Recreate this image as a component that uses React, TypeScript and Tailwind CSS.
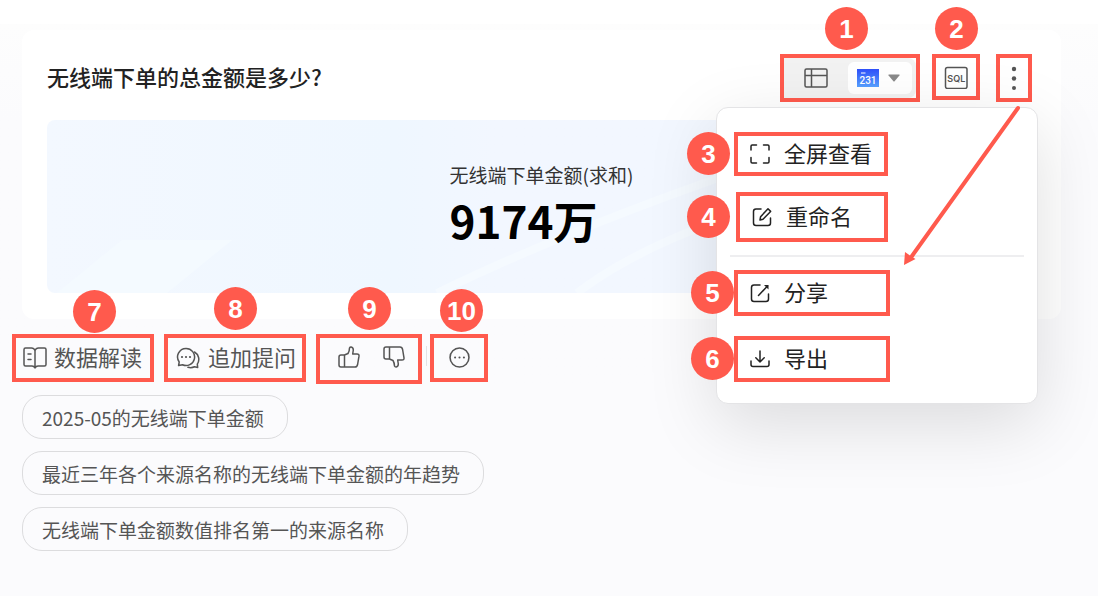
import type { ReactNode } from 'react'

const QUESTIONS = [
  '2025-05的无线端下单金额',
  '最近三年各个来源名称的无线端下单金额的年趋势',
  '无线端下单金额数值排名第一的来源名称'
]

interface CalloutProps {
  no: number
  className?: string
  badgeClassName: string
  children: ReactNode
}

// Red frame with a numbered badge next to it
function Callout({ no, className = '', badgeClassName, children }: CalloutProps) {
  return (
    <div className={`relative flex border-4 border-[#ff5a4d] ${className}`}>
      {children}
      <span
        className={`absolute z-20 flex size-[43px] items-center justify-center rounded-full bg-[#ff5a4d] font-['Liberation_Sans',sans-serif] text-[26px] leading-none font-bold text-white ${badgeClassName}`}
      >
        {no}
      </span>
    </div>
  )
}

function Icon({ children, className = 'size-5', box = '0 0 20 20' }: { children: ReactNode; className?: string; box?: string }) {
  return (
    <svg
      viewBox={box}
      fill="none"
      stroke="currentColor"
      strokeWidth={1.5}
      strokeLinecap="round"
      strokeLinejoin="round"
      className={`shrink-0 ${className}`}
      aria-hidden="true"
    >
      {children}
    </svg>
  )
}

function MenuItem({ icon, label }: { icon: ReactNode; label: string }) {
  return (
    <button type="button" role="menuitem" className="flex flex-1 items-center gap-[14px] pl-3 text-[22px] leading-none text-[#222]">
      {icon}
      <span className="pb-1">{label}</span>
    </button>
  )
}

function MoreMenu() {
  return (
    <div
      role="menu"
      className="absolute top-[49px] -right-[10px] z-10 flex w-[322px] flex-col rounded-xl border border-[#e4e4e6] bg-white px-[13px] pt-6 pb-[21px] shadow-[0_20px_70px_rgba(0,0,0,0.13)]"
    >
      <Callout no={3} className="ml-1 h-11 w-[154px]" badgeClassName="-top-1 -left-[51px]">
        <MenuItem
          label="全屏查看"
          icon={
            <Icon>
              <path d="M1 6V2.2Q1 1 2.2 1H6.500M13.500 1h4.300Q19 1 19 2.200V6M19 13.500v4.300Q19 19 17.800 19H13.500M6.500 19H2.200Q1 19 1 17.800V13.500" />
            </Icon>
          }
        />
      </Callout>
      <Callout no={4} className="mt-4 ml-[6px] h-[50px] w-[152px]" badgeClassName="-top-px -left-[53px]">
        <MenuItem
          label="重命名"
          icon={
            <Icon>
              <path d="M9 2H4Q1.500 2 1.500 4.500v11.500Q1.500 18.500 4 18.500h12Q18.500 18.500 18.500 16V11" />
              <path d="M16 1.800 18.600 4.400 11 12.200 8 13 8.600 9.700Z" />
            </Icon>
          }
        />
      </Callout>
      <hr className="my-[13px] border-t-2 border-[#eeeef0]" />
      <Callout no={5} className="ml-1 h-[46px] w-[156px]" badgeClassName="-top-[3px] -left-[47px]">
        <MenuItem
          label="分享"
          icon={
            <Icon>
              <path d="M10 2H4Q1.500 2 1.500 4.500v11.500Q1.500 18.500 4 18.500h12Q18.500 18.500 18.500 16V11" />
              <path d="M8.500 12.500 17.500 3" />
              <path d="M14 2h4.500v4.500Z" fill="currentColor" stroke="none" />
            </Icon>
          }
        />
      </Callout>
      <Callout no={6} className="mt-5 ml-1 h-[46px] w-[156px]" badgeClassName="-top-[3px] -left-[47px]">
        <MenuItem
          label="导出"
          icon={
            <Icon>
              <path d="M1 12v3.500Q1 17.500 3 17.500h14Q19 17.500 19 15.500V12M10 2v11M5.800 8.800 10 13l4.200-4.200" />
            </Icon>
          }
        />
      </Callout>

      {/* Arrow from the more button */}
      <svg viewBox="0 0 130 162" className="pointer-events-none absolute -top-[4px] right-1 z-20 h-[162px] w-[130px]" aria-hidden="true">
        <path d="M115 4 9 152" stroke="#ff5a4d" strokeWidth="4" strokeLinecap="round" />
        <path d="M1 161 2 148 7 151.500 12.500 155Z" fill="#ff5a4d" />
      </svg>
    </div>
  )
}

function Toolbar() {
  return (
    <div className="flex items-start text-[#555]">
      <Callout no={1} className="h-12 w-[140px]" badgeClassName="-top-[51px] left-[41px]">
        <div className="flex flex-1 items-center justify-between rounded-r-lg bg-[#f2f2f2] pr-1 pl-5">
          <button type="button" aria-label="表格">
            <Icon box="0 0 24 20" className="h-5 w-6">
              <path d="M2.500 1h19Q23 1 23 2.500v15Q23 19 21.500 19h-19Q1 19 1 17.500v-15Q1 1 2.500 1ZM1 7.500h22M7.500 1v18" />
            </Icon>
          </button>
          <button type="button" aria-label="指标卡" className="flex h-8 w-16 items-center gap-[9px] rounded-md bg-white pl-[9px]">
            <svg viewBox="0 0 22 18" className="h-[18px] w-[22px]" aria-hidden="true">
              <defs>
                <linearGradient id="kpi" x1="0" y1="0" x2="0" y2="1">
                  <stop offset="0" stopColor="#2f50fa" />
                  <stop offset="1" stopColor="#56a0ff" />
                </linearGradient>
              </defs>
              <rect width="22" height="18" fill="url(#kpi)" />
              <path d="M4 4h4.500" stroke="#fff" strokeWidth="1" />
              <text x="11" y="14.500" textAnchor="middle" fontSize="10" fontWeight="500" fill="#fff" fontFamily="Roboto, sans-serif">
                231
              </text>
            </svg>
            <svg viewBox="0 0 12 8" className="h-2 w-3" aria-hidden="true">
              <path d="M1 .5h10q1 0 .4.900L6.600 7.200q-.6.700-1.200 0L.600 1.400Q0 .5 1 .5Z" fill="#8a8a8a" />
            </svg>
          </button>
        </div>
      </Callout>
      <Callout no={2} className="ml-3 h-[46px] w-12" badgeClassName="-top-[51px] -left-px">
        <button type="button" aria-label="SQL" className="flex flex-1 items-center justify-center">
          <svg viewBox="0 0 24 24" className="size-6" aria-hidden="true">
            <rect x="1.500" y="2.500" width="21.500" height="21" rx="2" fill="none" stroke="currentColor" strokeWidth="1.500" />
            <text x="12.300" y="16.500" textAnchor="middle" fontSize="9" fontWeight="600" fill="currentColor" fontFamily="Inter, sans-serif">
              SQL
            </text>
          </svg>
        </button>
      </Callout>
      <div className="relative ml-4 flex h-12 w-9 border-4 border-[#ff5a4d]">
        <button type="button" aria-label="更多" aria-haspopup="menu" className="flex flex-1 items-center justify-center">
          <svg viewBox="0 0 6 24" className="h-6 w-[6px]" fill="currentColor" aria-hidden="true">
            <circle cx="3" cy="3" r="2.200" />
            <circle cx="3" cy="12.500" r="2.200" />
            <circle cx="3" cy="22" r="2" />
          </svg>
        </button>
        <MoreMenu />
      </div>
    </div>
  )
}

const THUMB_HAND = 'M6.500 9 10 7.500Q11.500 5 11.500 2 12 .9 13.200 1 15.300 1.400 15.300 4L14.700 8H19Q21.300 8 21 10.200L19.600 18.500Q19.100 21 17 21H3Q1 21 1 19V11Q1 9 3 9H6.500V21'

function Actions() {
  return (
    <div className="mt-[15px] flex items-start pl-3 text-[#555]">
      <Callout no={7} className="h-12 w-[142px]" badgeClassName="-top-[48px] left-[57px]">
        <button type="button" className="flex flex-1 items-center gap-[7px] pl-[7px] text-[22px] leading-none whitespace-nowrap">
          <Icon box="0 0 24 22" className="h-[22px] w-6">
            <path d="M12 3.500Q11 1 8.500 1H2.500Q1 1 1 2.500V17.500Q1 19 2.500 19H9Q11 19 12 21 13 19 15 19h6.500Q23 19 23 17.500V2.500Q23 1 21.500 1H15.500Q13 1 12 3.500V20M5 7h3M5 12.500h3" />
          </Icon>
          <span className="pb-1">数据解读</span>
        </button>
      </Callout>
      <Callout no={8} className="ml-[10px] h-12 w-[142px]" badgeClassName="-top-[51px] left-[46px]">
        <button type="button" className="flex flex-1 items-center gap-2 pl-2 text-[22px] leading-none whitespace-nowrap">
          <Icon box="0 0 24 22" className="h-[22px] w-6">
            <path d="M10 1.500A8.500 8.500 0 1 1 6.500 17.700L2.600 18.500 3.200 15A8.500 8.500 0 0 1 10 1.500Z" />
            <path d="M18.500 5A8.500 8.500 0 0 1 21.300 17.200L21.700 20.500 18.500 19.800A9 9 0 0 1 12 20.300" />
            <path d="M6 10h.01M10 10h.01M14 10h.01" strokeWidth={2.2} />
          </Icon>
          <span className="pb-1">追加提问</span>
        </button>
      </Callout>
      <Callout no={9} className="ml-[10px] h-[50px] w-[106px]" badgeClassName="-top-[51px] left-[28px]">
        <div className="flex flex-1 items-center justify-center gap-[23px] pb-1 pl-1">
          <button type="button" aria-label="赞">
            <Icon box="0 0 22 22" className="size-[22px]">
              <path d={THUMB_HAND} />
            </Icon>
          </button>
          <button type="button" aria-label="踩">
            <Icon box="0 0 22 22" className="size-[22px] -scale-y-100">
              <path d={THUMB_HAND} />
            </Icon>
          </button>
        </div>
      </Callout>
      <span className="mt-3 ml-1 h-5 w-px bg-[#e3e3e6]" />
      <Callout no={10} className="ml-[3px] h-12 w-[58px]" badgeClassName="-top-[49px] left-[6px]">
        <button type="button" aria-label="更多操作" className="flex flex-1 items-center justify-center pb-[2px]">
          <Icon className="size-[21px]">
            <circle cx="10" cy="10" r="9" />
            <path d="M5.800 10h.01M10 10h.01M14.200 10h.01" strokeWidth={2} />
          </Icon>
        </button>
      </Callout>
    </div>
  )
}

export default function App() {
  return (
    <main className="min-h-screen bg-[#fbfbfd] font-['Noto_Sans_CJK_SC',sans-serif]">
      <div className="bg-linear-to-b from-white from-[24px] via-[#fdfdfd] via-[24px] to-[#fbfbfd] to-[120px] pt-[30px]">
        <section className="mr-[37px] ml-[22px] rounded-xl bg-white px-[25px] pt-6 pb-[26px]">
          <header className="flex items-start justify-between pr-1">
            <h1 className="pt-[6px] text-[22px] leading-8 font-medium text-[#222]">无线端下单的总金额是多少?</h1>
            <Toolbar />
          </header>
          <div className="relative mt-[18px] flex h-[173px] justify-center overflow-hidden rounded-lg bg-linear-to-r from-[#f3f8ff] via-[#eff7ff] via-35% to-[#f2f7ff] to-45% pt-10">
            {/* Faint light bands */}
            <svg viewBox="0 0 989 173" preserveAspectRatio="none" className="absolute inset-0 size-full" aria-hidden="true">
              <path d="M10 173 75 120H185L120 173Z" fill="#f4faff" />
              <path d="M390 173Q520 110 700 48M530 173Q600 120 720 85" fill="none" stroke="#f5faff" strokeWidth="8" />
            </svg>
            <div className="relative">
              <p className="text-[19px] leading-[30px] text-[#333]">无线端下单金额(求和)</p>
              <p className="mt-[2px] text-[44px] leading-[56px] font-bold text-black">9174万</p>
            </div>
          </div>
        </section>

        <Actions />
      </div>

      <ul className="flex flex-col items-start gap-3 px-[22px] pt-[11px] pb-11">
        {QUESTIONS.map((q) => (
          <li key={q}>
            <button type="button" className="h-11 rounded-[20px] border border-[#dcdcde] pr-[23px] pl-[19px] text-[19px] leading-none text-[#555]">
              {q}
            </button>
          </li>
        ))}
      </ul>
    </main>
  )
}
